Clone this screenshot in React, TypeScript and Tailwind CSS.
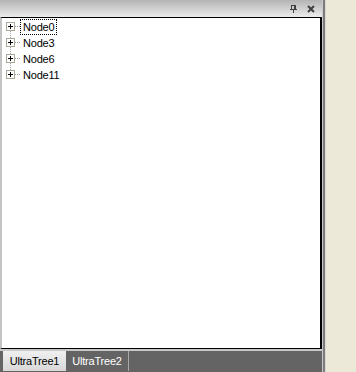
import React from "react";

const nodes = ["Node0", "Node3", "Node6", "Node11"];

function Connector({ first, last }: { first: boolean; last: boolean }) {
  return (
    <svg width="18" height="16" viewBox="0 0 18 16" className="shrink-0" shapeRendering="crispEdges">
      {!first && <line x1="8.5" y1="0" x2="8.5" y2="3" stroke="#a0a0a0" strokeDasharray="1 1" />}
      {!last && <line x1="8.5" y1="12" x2="8.5" y2="16" stroke="#a0a0a0" strokeDasharray="1 1" />}
      <line x1="13" y1="7.5" x2="18" y2="7.5" stroke="#a0a0a0" strokeDasharray="1 1" />
      <rect x="4.5" y="3.5" width="8" height="8" fill="#ffffff" stroke="#aca899" />
      <line x1="6" y1="7.5" x2="11" y2="7.5" stroke="#000000" />
      <line x1="8.5" y1="5" x2="8.5" y2="10" stroke="#000000" />
    </svg>
  );
}

export default function App() {
  return (
    <div
      className="flex w-[356px] h-[372px] overflow-hidden bg-[#ece9d8]"
      style={{ fontFamily: '"Liberation Sans", Arial, sans-serif' }}
    >
      <div className="flex flex-col w-[322px] h-full">
        {/* title bar */}
        <div className="h-[17px] shrink-0 bg-gradient-to-b from-[#b4b4b4] to-[#ececec] flex items-center justify-end pr-[7px] gap-[10px]">
          <svg width="7" height="8" viewBox="0 0 7 8" shapeRendering="crispEdges">
            <rect x="1.5" y="0.5" width="4" height="4" fill="none" stroke="#404040" />
            <line x1="4.5" y1="0" x2="4.5" y2="5" stroke="#404040" />
            <line x1="0" y1="4.5" x2="7" y2="4.5" stroke="#404040" />
            <line x1="3.5" y1="5" x2="3.5" y2="8" stroke="#404040" />
          </svg>
          <svg width="8" height="8" viewBox="0 0 8 8">
            <path d="M1 1 L7 7 M7 1 L1 7" stroke="#404040" strokeWidth="2" />
          </svg>
        </div>
        {/* content */}
        <div className="flex-1 flex flex-col bg-white border-t border-t-black border-r-2 border-r-black border-l-2 border-l-[#c4c4c4] border-b border-b-black pt-[1px]">
          {nodes.map((n, i) => (
            <div key={n} className="flex items-start h-[16px]">
              <Connector first={i === 0} last={i === nodes.length - 1} />
              <span
                className={
                  "h-[16px] leading-[14px] pl-[2px] pr-[2px] text-[11px] tracking-[-0.2px] text-black border " +
                  (i === 0 ? "border-dotted border-black" : "border-transparent")
                }
              >
                {n}
              </span>
            </div>
          ))}
        </div>
        {/* tab strip */}
        <div className="h-[2px] shrink-0 bg-[#c8c8c8]" />
        <div className="h-[21px] shrink-0 bg-[#646464] flex items-start pl-[3px] text-[11px] tracking-[-0.2px]">
          <div className="h-[20px] w-[63px] bg-gradient-to-b from-[#f0f0f0] to-[#d8d8d8] flex items-center justify-center text-black">
            UltraTree1
          </div>
          <div className="h-[20px] w-[63px] flex items-center justify-center text-white border-r border-r-[#a8a8a8]">
            UltraTree2
          </div>
        </div>
      </div>
      {/* splitter */}
      <div className="w-[4px] h-full flex shrink-0">
        <div className="w-[1px] bg-[#c8c8c8]" />
        <div className="w-[2px] bg-[#7c7c7c]" />
        <div className="w-[1px] bg-[#d8d8d8]" />
      </div>
      <div className="flex-1 bg-[#ece9d8]" />
    </div>
  );
}
